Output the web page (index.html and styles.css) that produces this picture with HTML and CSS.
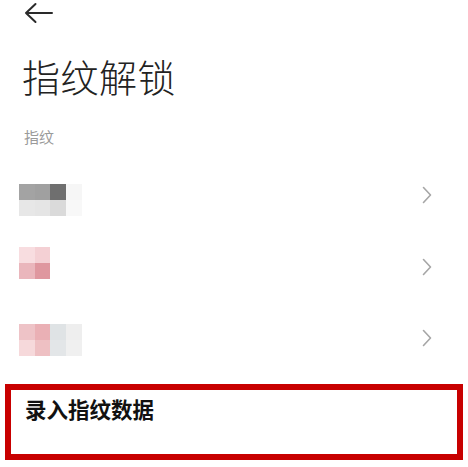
FILE: index.html
```html
<!DOCTYPE html>
<html lang="zh-CN">
<head>
<meta charset="utf-8">
<title>指纹解锁</title>
<link rel="stylesheet" href="styles.css">
</head>
<body>
<div class="page">
  <header class="topbar">
    <svg class="back" width="30" height="22" viewBox="0 0 30 22">
      <path d="M2 11 H28 M11.5 2 L2 11 L11.5 20" fill="none" stroke="#2a2a2a" stroke-width="2" stroke-linecap="round" stroke-linejoin="round"/>
    </svg>
  </header>
  <h1 class="title">指纹解锁</h1>
  <div class="section-label">指纹</div>
  <ul class="list">
    <li class="row">
      <div class="thumb thumb-a">
        <span class="px g1"></span><span class="px g2"></span><span class="px g3"></span><span class="px g4"></span>
        <span class="px g5"></span><span class="px g6"></span><span class="px g7"></span><span class="px g8"></span>
      </div>
      <svg class="chev" width="10" height="18" viewBox="0 0 10 18"><path d="M1.5 1.5 L8.5 9 L1.5 16.5" fill="none" stroke="#a6a6a6" stroke-width="1.6" stroke-linecap="round" stroke-linejoin="round"/></svg>
    </li>
    <li class="row row-b">
      <div class="thumb thumb-b">
        <span class="px r1"></span><span class="px r2"></span>
        <span class="px r3"></span><span class="px r4"></span>
      </div>
      <svg class="chev" width="10" height="18" viewBox="0 0 10 18"><path d="M1.5 1.5 L8.5 9 L1.5 16.5" fill="none" stroke="#a6a6a6" stroke-width="1.6" stroke-linecap="round" stroke-linejoin="round"/></svg>
    </li>
    <li class="row row-c">
      <div class="thumb thumb-a">
        <span class="px p1"></span><span class="px p2"></span><span class="px p3"></span><span class="px p4"></span>
        <span class="px p5"></span><span class="px p6"></span><span class="px p7"></span><span class="px p8"></span>
      </div>
      <svg class="chev" width="10" height="18" viewBox="0 0 10 18"><path d="M1.5 1.5 L8.5 9 L1.5 16.5" fill="none" stroke="#a6a6a6" stroke-width="1.6" stroke-linecap="round" stroke-linejoin="round"/></svg>
    </li>
  </ul>
  <div class="enroll">
    <span class="enroll-text">录入指纹数据</span>
  </div>
</div>
</body>
</html>
```

FILE: styles.css
```css
* { box-sizing: border-box; }
html, body {
  margin: 0;
  padding: 0;
  background: #ffffff;
}
body {
  font-family: "Noto Sans CJK SC", "Noto Sans", sans-serif;
  width: 468px;
  height: 467px;
  overflow: hidden;
}
.page {
  display: flex;
  flex-direction: column;
}
.topbar {
  height: 24px;
  padding: 2px 0 0 24px;
}
.back { display: block; }
.title {
  margin: 33px 0 0 22px;
  font-size: 38px;
  line-height: 38px;
  font-weight: 300;
  color: #222222;
  letter-spacing: 0.5px;
}
.section-label {
  margin: 34px 0 0 24px;
  font-size: 15px;
  line-height: 15px;
  color: #9a9a9a;
}
.list {
  list-style: none;
  margin: 18px 0 0 0;
  padding: 0;
}
.row {
  height: 72px;
  display: flex;
  align-items: center;
  justify-content: space-between;
  padding: 0 36px 0 19px;
}
.chev { display: block; margin-bottom: 6px; }
.row-c .chev { margin-bottom: 8px; }
.thumb {
  display: grid;
  grid-auto-rows: 16px;
}
.thumb-a { grid-template-columns: repeat(4, 15.7px); margin-top: 4px; }
.thumb-b { grid-template-columns: repeat(2, 15.5px); margin-bottom: 14px; margin-top: 0; }
.row-c .thumb { margin-top: -4px; }
.px { display: block; }
.g1 { background: #a3a3a3; }
.g2 { background: #a0a0a0; }
.g3 { background: #6f6f6f; }
.g4 { background: #f6f6f6; }
.g5 { background: #e7e7e7; }
.g6 { background: #e5e5e5; }
.g7 { background: #dadada; }
.g8 { background: #f8f8f8; }
.r1 { background: #f8dde0; }
.r2 { background: #f4d0d4; }
.r3 { background: #eab6bc; }
.r4 { background: #df979f; }
.p1 { background: #eec3c7; }
.p2 { background: #eab0b5; }
.p3 { background: #dfe3e5; }
.p4 { background: #eeeeee; }
.p5 { background: #f6d9db; }
.p6 { background: #eec0c3; }
.p7 { background: #e3e6e8; }
.p8 { background: #f0f0f0; }
.enroll {
  margin: 6px 5px 0 5px;
  height: 76px;
  border: 6px solid #c80000;
  padding: 8px 0 0 14px;
}
.enroll-text {
  font-size: 21.5px;
  line-height: 21px;
  font-weight: 700;
  color: #111111;
  display: block;
}
```
